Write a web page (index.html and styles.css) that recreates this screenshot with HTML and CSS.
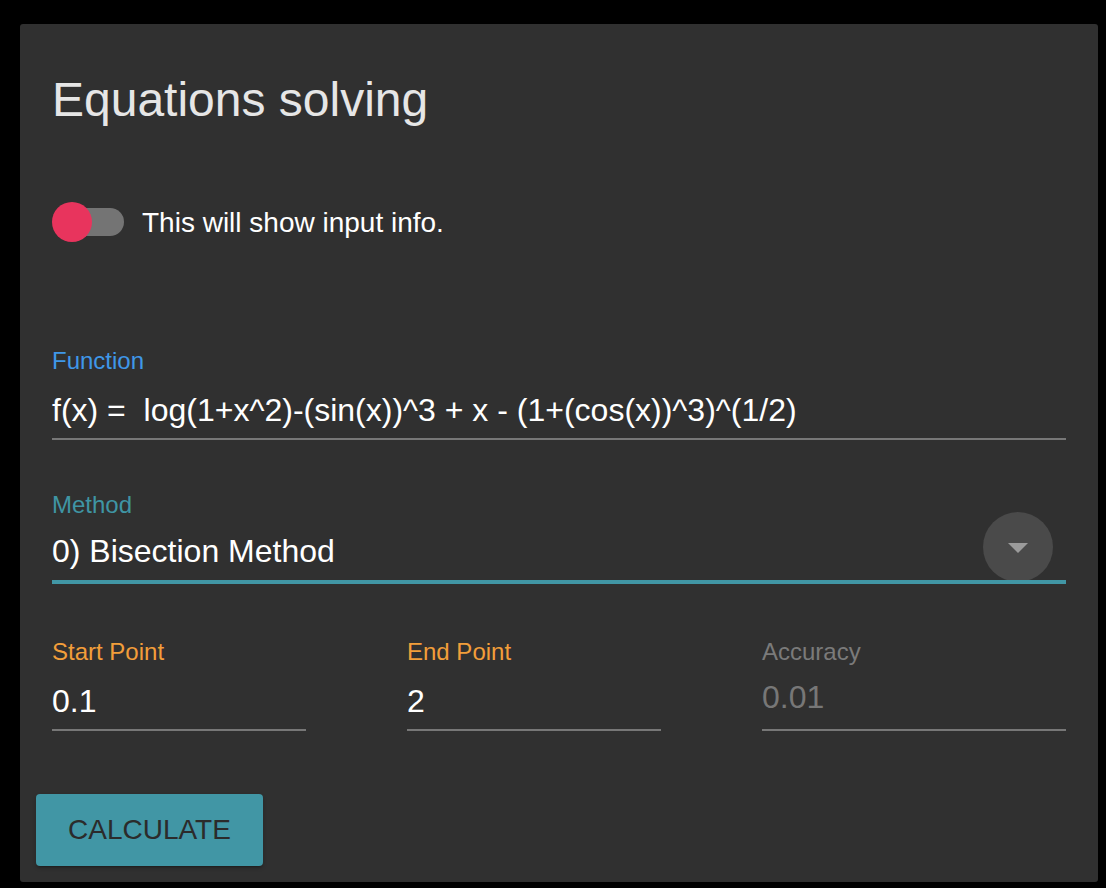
FILE: index.html
```html
<!DOCTYPE html>
<html lang="en">
<head>
<meta charset="utf-8">
<title>Equations solving</title>
<link rel="stylesheet" href="styles.css">
</head>
<body>
<div class="card">
  <div class="card-body">
    <h1 class="title">Equations solving</h1>

    <div class="switch">
      <div class="switch-control"><span class="track"></span><span class="knob"></span></div>
      <span class="switch-label">This will show input info.</span>
    </div>

    <div class="field field-function">
      <div class="label label-blue">Function</div>
      <div class="control"><span class="value pre">f(x) =  log(1+x^2)-(sin(x))^3 + x - (1+(cos(x))^3)^(1/2)</span></div>
    </div>

    <div class="field field-select">
      <div class="label label-teal">Method</div>
      <div class="control control-select">
        <span class="value">0) Bisection Method</span>
        <span class="dropdown"><span class="caret"></span></span>
      </div>
    </div>

    <div class="row">
      <div class="field">
        <div class="label label-orange">Start Point</div>
        <div class="control"><span class="value">0.1</span></div>
      </div>
      <div class="field">
        <div class="label label-orange">End Point</div>
        <div class="control"><span class="value">2</span></div>
      </div>
      <div class="field field-muted">
        <div class="label label-gray">Accuracy</div>
        <div class="control"><span class="value">0.01</span></div>
      </div>
    </div>
  </div>

  <div class="actions">
    <button class="btn" type="button">CALCULATE</button>
  </div>
</div>
</body>
</html>
```

FILE: styles.css
```css
* { box-sizing: border-box; }

html, body {
  margin: 0;
  background: #000;
}

body {
  padding: 24px 8px 6px 20px;
  font-family: "Liberation Sans", Arial, Helvetica, sans-serif;
}

.card {
  background: #303030;
  border-radius: 3px;
  padding: 0 16px 16px;
}

.card-body {
  padding: 48px 16px 0;
}

.title {
  margin: 0;
  font-size: 48px;
  line-height: 56px;
  font-weight: 400;
  color: #e6e6e6;
}

/* switch */
.switch {
  display: flex;
  align-items: center;
  margin-top: 74px;
  height: 40px;
}

.switch-control {
  position: relative;
  width: 72px;
  height: 40px;
  flex: none;
}

.track {
  position: absolute;
  left: 4px;
  top: 6px;
  width: 68px;
  height: 28px;
  border-radius: 14px;
  background: #747474;
}

.knob {
  position: absolute;
  left: 0;
  top: 0;
  width: 40px;
  height: 40px;
  border-radius: 50%;
  background: #e8345d;
}

.switch-label {
  margin-left: 18px;
  padding-top: 2px;
  font-size: 28px;
  line-height: 40px;
  color: #fff;
}

/* fields */
.field-function { margin-top: 105px; }
.field-select { margin-top: 51px; }

.label {
  font-size: 24px;
  line-height: 28px;
}

.label-blue { color: #3f97e8; }
.label-teal { color: #3f95a4; }
.label-orange { color: #f29e3a; }
.label-gray { color: #7a7a7a; }

.control {
  margin-top: 15px;
  padding-bottom: 8px;
  border-bottom: 2px solid #777;
  font-size: 32px;
  line-height: 40px;
  color: #fff;
}

.pre { white-space: pre; }

.control-select {
  position: relative;
  margin-top: 12px;
  padding-bottom: 13px;
  border-bottom: none;
}

.control-select::after {
  content: "";
  position: absolute;
  left: 0;
  right: 0;
  bottom: 0;
  height: 4px;
  background: #4196a5;
}

.dropdown {
  position: absolute;
  right: 13px;
  top: -19px;
  width: 70px;
  height: 70px;
  border-radius: 50%;
  background: #4a4a4a;
  display: flex;
  align-items: center;
  justify-content: center;
}

.caret {
  width: 0;
  height: 0;
  border-left: 10px solid transparent;
  border-right: 10px solid transparent;
  border-top: 10px solid #9b9b9b;
  margin-top: 2px;
}

/* row of three */
.row {
  display: grid;
  grid-template-columns: 254px 254px 304px;
  justify-content: space-between;
  margin-top: 54px;
}

.field-muted .control {
  margin-top: 11px;
  padding-bottom: 12px;
  color: #777;
}

/* actions */
.actions {
  margin-top: 63px;
}

.btn {
  display: inline-block;
  height: 72px;
  padding: 0 32px;
  border: none;
  border-radius: 4px;
  background: #4196a5;
  color: #2b2b2b;
  font-family: "Liberation Sans", Arial, Helvetica, sans-serif;
  font-size: 28px;
  line-height: 72px;
  box-shadow: 0 3px 2px -2px rgba(0,0,0,0.25), 0 2px 4px rgba(0,0,0,0.2);
}
```
